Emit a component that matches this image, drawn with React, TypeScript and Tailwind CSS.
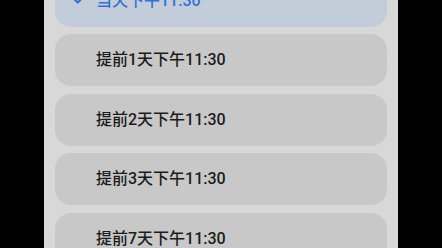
import React from 'react';

const options = ['提前1天下午11:30', '提前2天下午11:30', '提前3天下午11:30', '提前7天下午11:30'];

export default function App() {
  return (
    <div className="w-[442px] h-[248px] bg-black flex justify-center overflow-hidden" style={{ fontFamily: 'Roboto, "Noto Sans CJK SC", sans-serif' }}>
      <div className="w-[354px] h-full bg-[#d8d8d8] px-[11px] overflow-hidden">
        <div className="flex flex-col gap-[7.5px] -mt-[25.5px]">
          <div className="h-[52px] rounded-[16px] bg-[#c3cdd9] flex items-center pl-[14px] text-[#2f72da]">
            <svg className="-mt-[6px]" width="22" height="22" viewBox="0 0 24 24" fill="none" stroke="currentColor" strokeWidth="2.4" strokeLinecap="round" strokeLinejoin="round">
              <path d="M5 12.5l4.5 4.5L19 7.5" />
            </svg>
            <span className="ml-[5px] text-[16px] font-medium">当天下午11:30</span>
          </div>
          {options.map((o) => (
            <div key={o} className="h-[52px] rounded-[16px] bg-[#c8c8c8] flex items-center pl-[41px]">
              <span className="text-[16px] font-medium text-[#1c1c1c]">{o}</span>
            </div>
          ))}
        </div>
      </div>
    </div>
  );
}
